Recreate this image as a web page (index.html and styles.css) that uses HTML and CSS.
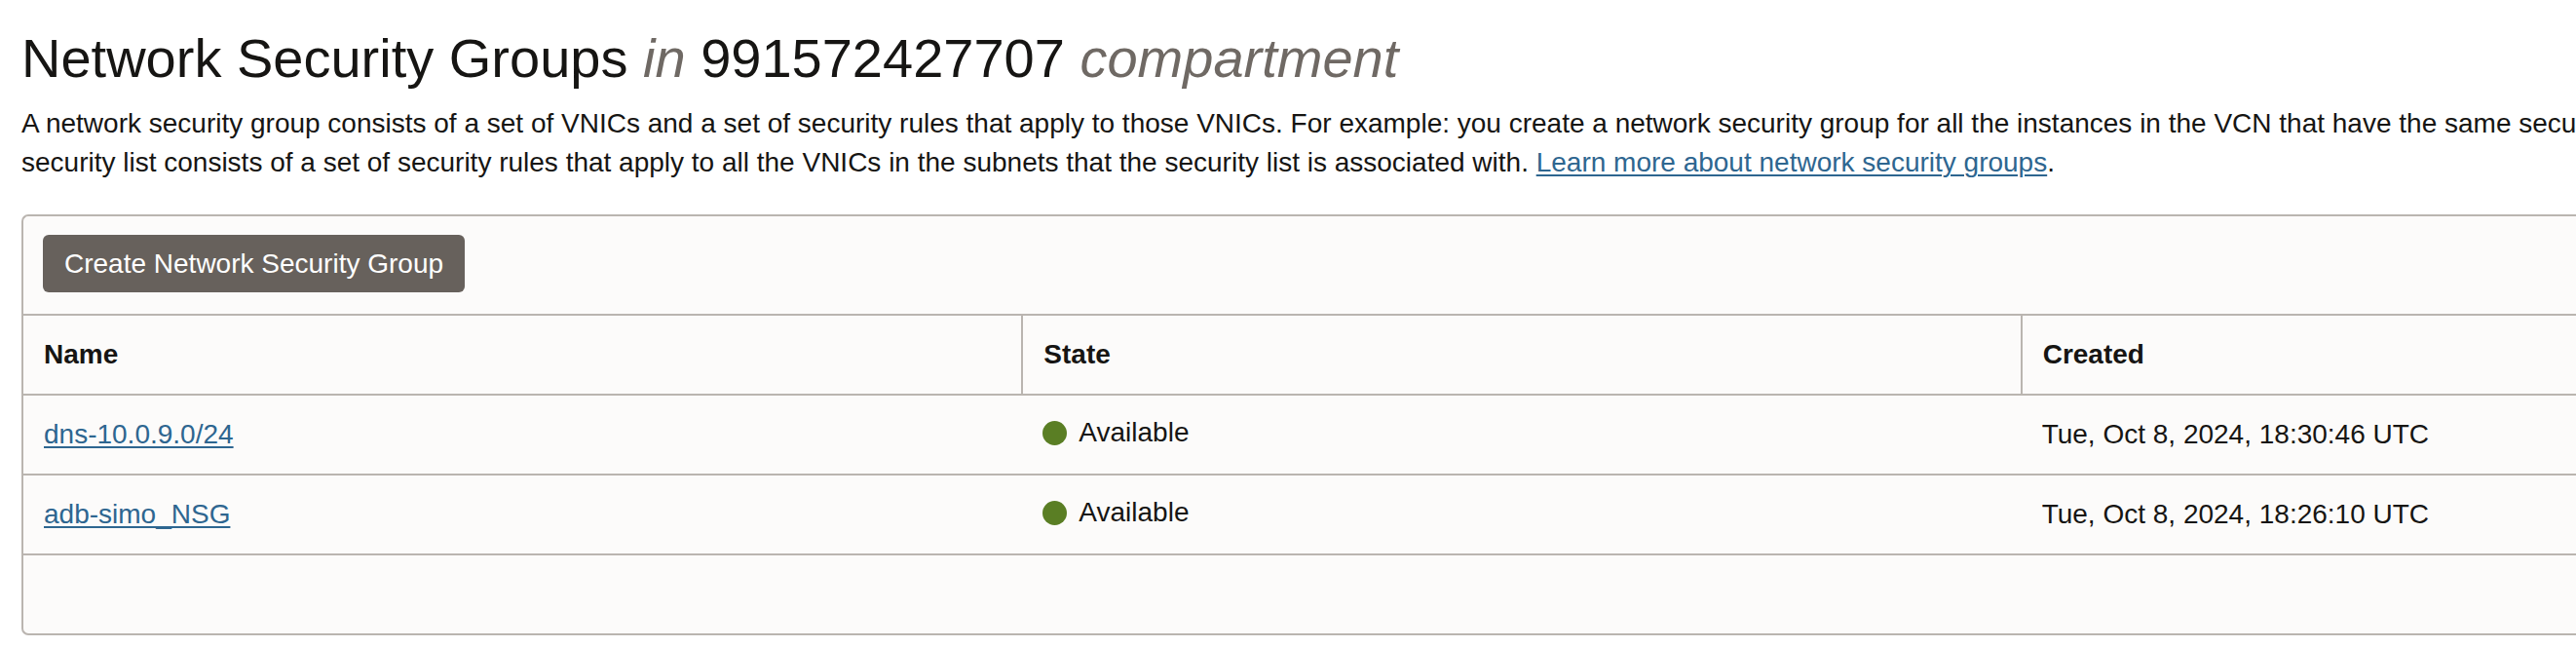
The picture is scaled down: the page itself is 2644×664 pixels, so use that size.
FILE: index.html
```html
<!DOCTYPE html>
<html lang="en">
  <head>
    <meta charset="UTF-8" />
    <meta name="viewport" content="width=device-width, initial-scale=1.0" />
    <title>Network Security Groups</title>
    <link rel="stylesheet" href="styles.css">
  </head>
  <body>
    <div class="page">
      <h1 class="title">
        Network Security Groups <em>in</em> 991572427707 <em>compartment</em>
      </h1>
      <p class="intro">
        A network security group consists of a set of VNICs and a set of security rules that apply to those VNICs. For example: you create a network security group for all the instances in the VCN that have the same security posture. Whereas a<br>
        security list consists of a set of security rules that apply to all the VNICs in the subnets that the security list is associated with. <a href="#">Learn more about network security groups</a>.
      </p>

      <div class="panel">
        <div class="toolbar">
          <button class="btn-create">Create Network Security Group</button>
        </div>

        <table class="nsg-table">
          <thead>
            <tr>
              <th>Name</th>
              <th>State</th>
              <th>Created</th>
            </tr>
          </thead>
          <tbody>
            <tr>
              <td><a href="#">dns-10.0.9.0/24</a></td>
              <td><span class="state"><span class="dot"></span>Available</span></td>
              <td>Tue, Oct 8, 2024, 18:30:46 UTC</td>
            </tr>
            <tr>
              <td><a href="#">adb-simo_NSG</a></td>
              <td><span class="state"><span class="dot"></span>Available</span></td>
              <td>Tue, Oct 8, 2024, 18:26:10 UTC</td>
            </tr>
          </tbody>
        </table>

        <div class="panel-footer"></div>
      </div>
    </div>
  </body>
</html>
```

FILE: styles.css
```css
html,
body {
  overflow: hidden;
}

body {
  margin: 0;
  padding: 0;
  background-color: #fff;
  color: #161513;
  font-family: "Liberation Sans", Arial, sans-serif;
  font-size: 28px;
}

.page {
  width: 3078px;
  padding: 28px 22px 0;
}

.title {
  margin: 0;
  font-size: 56px;
  font-weight: normal;
  line-height: 64px;
}

.title em {
  color: #6f6964;
}

.intro {
  margin: 15px 0 0;
  line-height: 40px;
}

a {
  color: #2e6690;
  text-decoration: underline;
  text-decoration-thickness: 2px;
  text-underline-offset: 3px;
}

.panel {
  margin-top: 33px;
  background-color: #fcfbfa;
  border: 2px solid #bab5b0;
  border-right: none;
  border-radius: 7px 0 0 7px;
}

.toolbar {
  padding: 19px 20px 22px;
  border-bottom: 2px solid #bab5b0;
}

.btn-create {
  height: 59px;
  padding: 0 22px;
  background-color: #67615c;
  color: #fff;
  border: none;
  border-radius: 6px;
  font-family: inherit;
  font-size: 28px;
}

.nsg-table {
  width: 100%;
  border-collapse: collapse;
  table-layout: fixed;
}

.nsg-table th,
.nsg-table td {
  height: 80px;
  padding: 0 21px;
  text-align: left;
  vertical-align: middle;
  line-height: 40px;
  border-bottom: 2px solid #bab5b0;
}

.nsg-table th {
  font-weight: bold;
}

.nsg-table th + th {
  border-left: 2px solid #bab5b0;
}

.state {
  display: inline-flex;
  align-items: center;
  gap: 12px;
}

.dot {
  width: 25px;
  height: 25px;
  border-radius: 50%;
  background-color: #5a7e24;
}

.panel-footer {
  height: 80px;
}
```
